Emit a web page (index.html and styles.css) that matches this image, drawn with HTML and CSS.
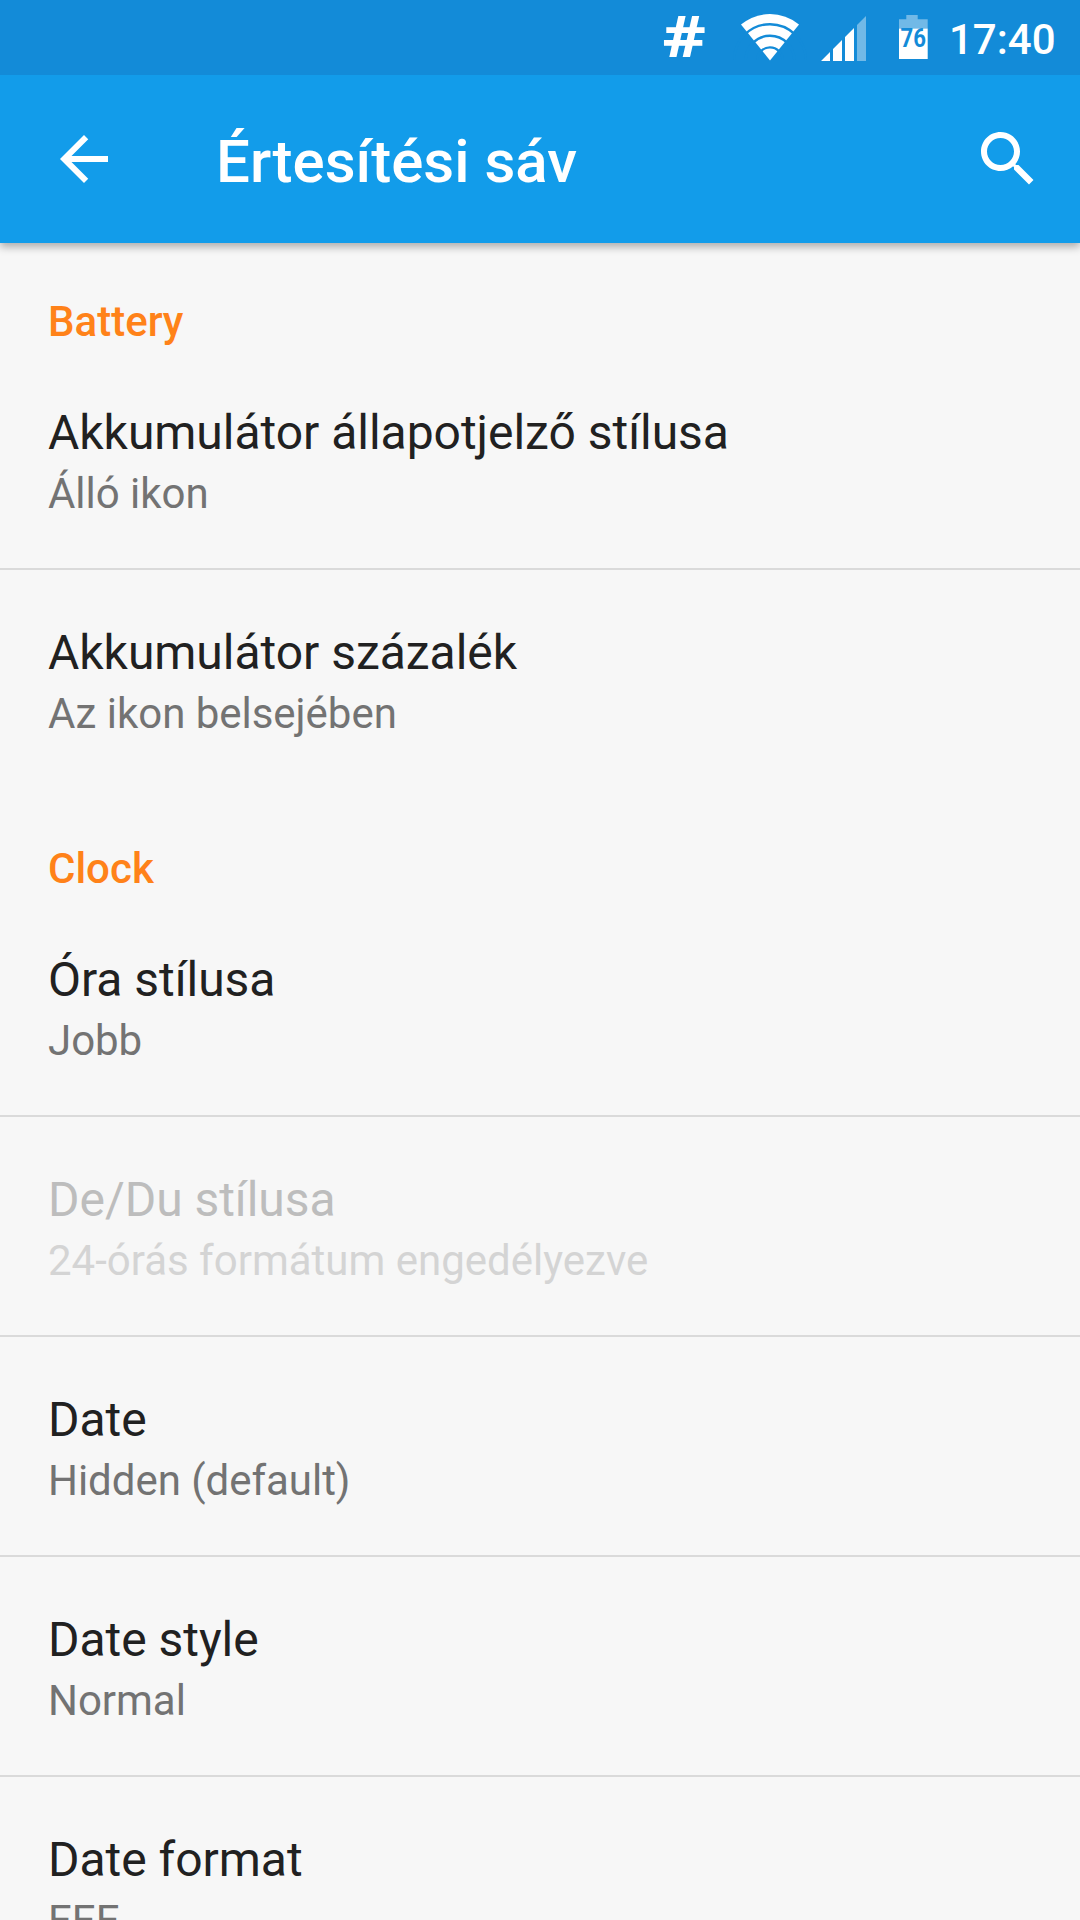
FILE: index.html
```html
<!DOCTYPE html>
<html lang="hu">
<head>
<meta charset="utf-8">
<title>Értesítési sáv</title>
<link rel="stylesheet" href="styles.css">
</head>
<body>
<div class="status">
<svg class="status-icons" width="290" height="75" viewBox="0 0 290 75">
<text class="hash" x="2.5" y="57" textLength="43.5" lengthAdjust="spacingAndGlyphs">#</text>
<path d="M110 60.5L81 24.5Q94 14 110 14T139 24.5Z" fill="#fff"/>
<path class="wifi-gaps" d="M74.2 60A35.8 35.8 0 0 1 145.8 60M85.7 60A24.3 24.3 0 0 1 134.3 60M97.4 60A12.6 12.6 0 0 1 122.6 60"/>
<path d="M161 61L170 52V61ZM173 61V49L182 40V61ZM185 61V37L194 28V61Z" fill="#fff"/>
<path d="M197 61V25L206 16V61Z" fill="#fff" opacity=".4"/>
<path d="M246.3 15h11.4v4.3h10V28.5H239V19.3h7.3z" fill="#fff" opacity=".4"/>
<path d="M239 28.5h28.7V59H239z" fill="#fff"/>
<text class="level" x="240.6" y="46.7" textLength="25.4" lengthAdjust="spacingAndGlyphs">76</text>
</svg>
<span class="time">17:40</span>
</div>
<header class="toolbar">
<svg class="back" width="72" height="72" viewBox="0 0 24 24"><path d="M20 11H7.83l5.59-5.59L12 4l-8 8 8 8 1.41-1.41L7.83 13H20v-2z"/></svg>
<h1>Értesítési sáv</h1>
<svg class="search" width="72" height="72" viewBox="0 0 24 24"><path d="M15.5 14h-.79l-.28-.27C15.41 12.59 16 11.11 16 9.5 16 5.91 13.09 3 9.5 3S3 5.91 3 9.5 5.91 16 9.5 16c1.61 0 3.09-.59 4.23-1.57l.27.28v.79l5 4.99L20.49 19l-4.99-5zm-6 0C7.01 14 5 11.99 5 9.5S7.01 5 9.5 5 14 7.01 14 9.5 11.99 14 9.5 14z"/></svg>
</header>
<main>
<h2 class="first">Battery</h2>
<section>
<div class="item"><p class="title">Akkumulátor állapotjelző stílusa</p><p class="summary">Álló ikon</p></div>
<div class="item"><p class="title">Akkumulátor százalék</p><p class="summary">Az ikon belsejében</p></div>
</section>
<h2>Clock</h2>
<section>
<div class="item"><p class="title">Óra stílusa</p><p class="summary">Jobb</p></div>
<div class="item disabled"><p class="title">De/Du stílusa</p><p class="summary">24-órás formátum engedélyezve</p></div>
<div class="item"><p class="title">Date</p><p class="summary">Hidden (default)</p></div>
<div class="item"><p class="title">Date style</p><p class="summary">Normal</p></div>
<div class="item"><p class="title">Date format</p><p class="summary">EEE</p></div>
</section>
</main>
</body>
</html>
```
FILE: styles.css
```css
* { box-sizing: border-box; margin: 0; padding: 0; }
body { width: 1080px; height: 1920px; overflow: hidden; display: flex; flex-direction: column; background: #f7f7f7; font-family: Roboto, sans-serif; }
.status { position: relative; z-index: 1; flex: none; height: 75px; display: flex; justify-content: flex-end; align-items: center; background: #138bd8; color: #fff; padding-right: 25px; }
.status-icons { overflow: visible; }
.hash { font: 700 57px "Open Sans", sans-serif; fill: #fff; }
.wifi-gaps { fill: none; stroke: #138bd8; stroke-width: 2.4px; }
.level { font: 700 25px Roboto, sans-serif; fill: #138bd8; }
.time { width: 105px; margin-left: -1px; margin-right: 1px; font-size: 42px; font-weight: 500; line-height: 75px; padding-top: 4px; }
.toolbar { flex: none; height: 168px; display: flex; align-items: center; padding: 0 36px 0 48px; background: #129cea; color: #fff; fill: #fff; box-shadow: 0 4px 8px rgba(0,0,0,.3); }
h1 { flex: 1; margin-left: 96px; padding-top: 6px; font-size: 60px; font-weight: 500; line-height: 70px; }
main { flex: none; }
h2 { height: 107px; padding: 56px 48px 0; font-size: 42px; font-weight: 500; line-height: 50px; color: #ff8219; }
h2.first { height: 105px; padding-top: 54px; }
.item { height: 220px; padding: 55px 48px 0; color: #212121; }
.item + .item { border-top: 2px solid #dadada; padding-top: 53px; }
.title { font-size: 48px; line-height: 60px; letter-spacing: -.03px; }
.summary { margin-top: 1px; font-size: 42px; line-height: 60px; letter-spacing: -.03px; color: #737373; }
.disabled .title { color: #bdbdbd; }
.disabled .summary { letter-spacing: 0; color: #d4d4d4; }
```
